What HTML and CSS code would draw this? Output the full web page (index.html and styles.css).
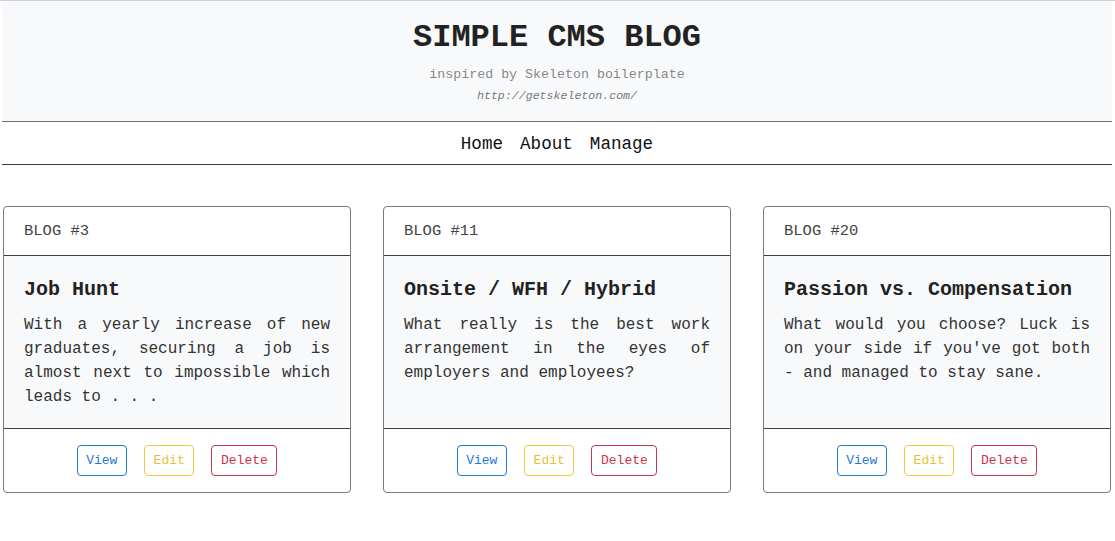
FILE: index.html
```html
<!DOCTYPE html>
<html>
<head>
<meta charset="utf-8">
<link rel="stylesheet" href="styles.css">
</head>
<body>
<div class="topbar"></div>
<header class="site-header">
  <h1 class="site-title">SIMPLE CMS BLOG</h1>
  <p class="tagline">inspired by Skeleton boilerplate</p>
  <p class="source">http://getskeleton.com/</p>
</header>
<nav class="site-nav">
  <a href="#">Home</a>
  <a href="#">About</a>
  <a href="#">Manage</a>
</nav>
<main class="cards">
  <article class="card">
    <div class="card-head">BLOG #3</div>
    <div class="card-body">
      <h2 class="card-title">Job Hunt</h2>
      <p class="card-text">With a yearly increase of new graduates, securing a job is almost next to impossible which leads to . . .</p>
    </div>
    <div class="card-foot">
      <button class="btn btn-view">View</button>
      <button class="btn btn-edit">Edit</button>
      <button class="btn btn-delete">Delete</button>
    </div>
  </article>
  <article class="card">
    <div class="card-head">BLOG #11</div>
    <div class="card-body">
      <h2 class="card-title">Onsite / WFH / Hybrid</h2>
      <p class="card-text">What really is the best work arrangement in the eyes of employers and employees?</p>
    </div>
    <div class="card-foot">
      <button class="btn btn-view">View</button>
      <button class="btn btn-edit">Edit</button>
      <button class="btn btn-delete">Delete</button>
    </div>
  </article>
  <article class="card">
    <div class="card-head">BLOG #20</div>
    <div class="card-body">
      <h2 class="card-title">Passion vs. Compensation</h2>
      <p class="card-text">What would you choose? Luck is on your side if you've got both - and managed to stay sane.</p>
    </div>
    <div class="card-foot">
      <button class="btn btn-view">View</button>
      <button class="btn btn-edit">Edit</button>
      <button class="btn btn-delete">Delete</button>
    </div>
  </article>
</main>
</body>
</html>
```
FILE: styles.css
```css
* { box-sizing: border-box; }
html, body { margin: 0; padding: 0; background: #fff; }
body {
  font-family: "Liberation Mono", "Courier New", monospace;
  color: #222;
}
.topbar { height: 1px; background: #cfd1d4; }
.site-header {
  background: #f8f9fa;
  margin: 0 3px 0 2px;
  height: 121px;
  padding-top: 19px;
  text-align: center;
  border-bottom: 1px solid #6c6c6c;
}
.site-title {
  margin: 0;
  font-size: 32px;
  line-height: 36px;
  font-weight: bold;
  color: #222;
}
.tagline {
  margin: 11px 0 0;
  font-size: 13.3px;
  line-height: 16px;
  color: #888;
}
.source {
  margin: 6px 0 0;
  font-size: 11.6px;
  line-height: 14px;
  font-style: italic;
  color: #777;
}
.site-nav {
  margin: 0 3px 0 2px;
  height: 43px;
  display: flex;
  justify-content: center;
  align-items: center;
  gap: 17px;
  border-bottom: 1px solid #3a3a3a;
  padding-top: 2px;
}
.site-nav a {
  color: #111;
  text-decoration: none;
  font-size: 17.6px;
}
.cards {
  display: grid;
  grid-template-columns: 348px 348px 348px;
  column-gap: 32px;
  padding: 41px 0 0 3px;
}
.card {
  border: 1px solid #7a7a7a;
  border-radius: 4px;
  display: flex;
  flex-direction: column;
  overflow: hidden;
  background: #fff;
}
.card-head {
  height: 49px;
  padding: 15px 20px 0;
  font-size: 15.5px;
  line-height: 18px;
  color: #444;
  border-bottom: 1px solid #3e3e3e;
}
.card-body {
  flex: 1;
  background: #f8f9fa;
  padding: 22px 20px 17px;
  border-bottom: 1px solid #3e3e3e;
  min-height: 173px;
}
.card-title {
  margin: 0;
  font-size: 20px;
  line-height: 24px;
  font-weight: bold;
  color: #222;
}
.card-text {
  margin: 11px 0 0;
  font-size: 16px;
  line-height: 24px;
  text-align: justify;
  color: #333;
}
.card-foot {
  height: 63px;
  display: flex;
  justify-content: center;
  align-items: center;
  gap: 17px;
  padding-bottom: 1px;
}
.btn {
  font-family: "Liberation Mono", "Courier New", monospace;
  font-size: 13px;
  height: 31px;
  padding: 0 8.6px;
  background: #fff;
  border: 1px solid;
  border-radius: 4px;
  cursor: pointer;
}
.btn-view { color: #1f78d1; border-color: #1f78d1; }
.btn-edit { color: #eabf3c; border-color: #f5c842; }
.btn-delete { color: #c9344d; border-color: #c9344d; }
```
